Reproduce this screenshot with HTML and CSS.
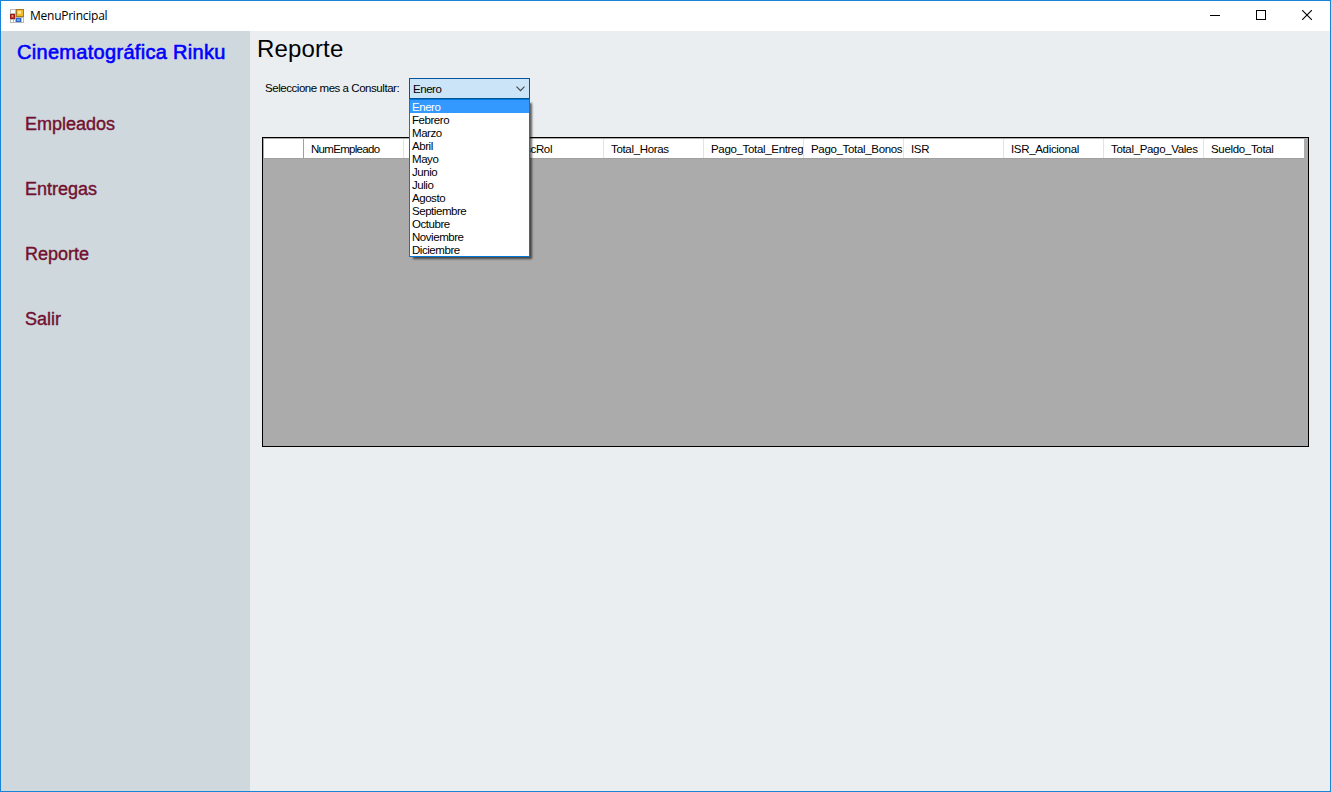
FILE: index.html
```html
<!DOCTYPE html>
<html lang="es">
<head>
<meta charset="utf-8">
<title>MenuPrincipal</title>
<link rel="stylesheet" href="styles.css">
</head>
<body>
<div class="window">
  <header class="titlebar">
    <svg class="app-icon" width="14" height="14" viewBox="0 0 14 14" shape-rendering="crispEdges">
      <rect width="14" height="14" fill="#b9b9b9"/>
      <path d="M1 1h4v3H1zM1 11h2v2H1zM4 11h1v2H4zM12 9h1v4h-1z" fill="#fff"/>
      <rect x="6" width="8" height="8" fill="#a87a20"/>
      <rect x="7" y="1" width="6" height="6" fill="#f5bd28"/>
      <rect x="8" y="2" width="3" height="3" fill="#ffe58a"/>
      <rect y="5" width="5" height="5" fill="#9c1c12"/>
      <rect x="1" y="6" width="3" height="3" fill="#cf3c2c"/>
      <rect x="2" y="6" width="1" height="2" fill="#f0a090"/>
      <rect x="6" y="9" width="5" height="4" fill="#2f68c8"/>
      <rect x="7" y="10" width="3" height="2" fill="#6ba4f4"/>
    </svg>
    <span class="caption">MenuPrincipal</span>
    <div class="controls">
      <svg width="10" height="10" viewBox="0 0 10 10" shape-rendering="crispEdges"><path d="M0 5h10v1H0z"/></svg>
      <svg width="10" height="10" viewBox="0 0 10 10" shape-rendering="crispEdges"><path d="M.5.5h9v9h-9z" fill="none" stroke="#000"/></svg>
      <svg width="10" height="10" viewBox="0 0 10 10"><path d="M0 0l10 10M10 0L0 10" fill="none" stroke="#000" stroke-width="1.1"/></svg>
    </div>
  </header>
  <div class="body">
    <aside class="sidebar">
      <h1 class="brand">Cinematográfica Rinku</h1>
      <nav class="menu">
        <a>Empleados</a>
        <a>Entregas</a>
        <a>Reporte</a>
        <a>Salir</a>
      </nav>
    </aside>
    <main class="content">
      <h2 class="heading">Reporte</h2>
      <div class="filter">
        <label class="filter-label">Seleccione mes a Consultar:</label>
        <div class="combo">
          <span>Enero</span>
          <svg width="9" height="6" viewBox="0 0 9 6"><path d="M.5.7l4 4 4-4" fill="none" stroke="#404448" stroke-width="1.1"/></svg>
          <ul class="options">
            <li class="selected">Enero</li><li>Febrero</li><li>Marzo</li><li>Abril</li><li>Mayo</li><li>Junio</li><li>Julio</li><li>Agosto</li><li>Septiembre</li><li>Octubre</li><li>Noviembre</li><li>Diciembre</li>
          </ul>
        </div>
      </div>
      <section class="grid">
        <div class="grid-head">
          <div class="corner"></div>
          <div class="cell tight">NumEmpleado</div>
          <div class="cell"></div>
          <div class="cell">DescRol</div>
          <div class="cell">Total_Horas</div>
          <div class="cell">Pago_Total_Entreg</div>
          <div class="cell">Pago_Total_Bonos</div>
          <div class="cell">ISR</div>
          <div class="cell">ISR_Adicional</div>
          <div class="cell">Total_Pago_Vales</div>
          <div class="cell last">Sueldo_Total</div>
        </div>
      </section>
    </main>
  </div>
</div>
</body>
</html>
```
FILE: styles.css
```css
* { box-sizing: border-box; }
body {
  margin: 0;
  overflow: hidden;
  font-family: "Liberation Sans", Arial, sans-serif;
  font-size: 11.5px;
  letter-spacing: -0.45px;
  color: #000;
}
.window {
  width: 1331px;
  height: 792px;
  border: 1px solid #1883d7;
  display: flex;
  flex-direction: column;
  background: #eaeef1;
}
.titlebar {
  height: 30px;
  flex: none;
  display: flex;
  align-items: center;
  padding: 0 18px 0 9px;
  background: #fff;
}
.app-icon { margin-bottom: 1px; }
.caption {
  margin: -2px 0 0 6px;
  font-family: "Open Sans", "Noto Sans", sans-serif;
  font-size: 12px;
  letter-spacing: -0.25px;
}
.controls { margin-left: auto; display: flex; gap: 36px; padding-bottom: 2px; }
.body { flex: 1; display: flex; }
.sidebar { width: 249px; background: #cfd8dd; }
.brand {
  margin: 9px 0 0 16px;
  font-size: 20px;
  line-height: 24px;
  font-weight: 400;
  color: #00f;
  -webkit-text-stroke: 0.6px #00f;
  white-space: nowrap;
  letter-spacing: 0.3px;
}
.menu {
  margin: 48px 0 0 24px;
  display: flex;
  flex-direction: column;
  gap: 41px;
  font-size: 18px;
  line-height: 24px;
  color: #721030;
  -webkit-text-stroke: 0.4px #721030;
  letter-spacing: 0;
}
.content { flex: 1; padding: 0 21px 0 12px; }
.heading {
  margin: 4px 0 0 -5px;
  font-size: 24px;
  line-height: 28px;
  font-weight: 400;
  letter-spacing: 0.15px;
}
.filter { display: flex; margin: 15px 0 0 3px; height: 21px; }
.filter-label { width: 144px; line-height: 20px; white-space: nowrap; }
.combo {
  position: relative;
  width: 121px;
  height: 21px;
  padding: 0 4px 0 3px;
  display: flex;
  align-items: center;
  justify-content: space-between;
  border: 1px solid #00559b;
  background: #cce4f7;
}
.options {
  position: absolute;
  z-index: 2;
  top: 20px;
  left: -1px;
  width: 121px;
  margin: 0;
  padding: 0;
  list-style: none;
  border: 1px solid #0078d7;
  background: #fff;
  box-shadow: 3px 3px 2px -1px rgba(0, 0, 0, 0.6);
}
.options li { height: 13px; padding-left: 2px; line-height: 14px; }
.options .selected { background: #3399ff; color: #fff; }
.grid {
  width: 1047px;
  height: 310px;
  margin-top: 38px;
  padding: 1px 0 0 1px;
  border: 1px solid #000;
  background: #ababab;
}
.grid-head {
  display: flex;
  width: 1040px;
  height: 20px;
  background: #fff;
  border-bottom: 1px solid #a0a0a0;
}
.corner { width: 40px; flex: none; border-right: 1px solid #a0a0a0; }
.cell {
  width: 100px;
  flex: none;
  padding-left: 7px;
  border-right: 1px solid #e3e3e3;
  line-height: 20px;
  letter-spacing: -0.33px;
  white-space: nowrap;
  overflow: hidden;
}
.cell.tight { letter-spacing: -0.7px; }
.cell.last { border-right: 0; }
```
